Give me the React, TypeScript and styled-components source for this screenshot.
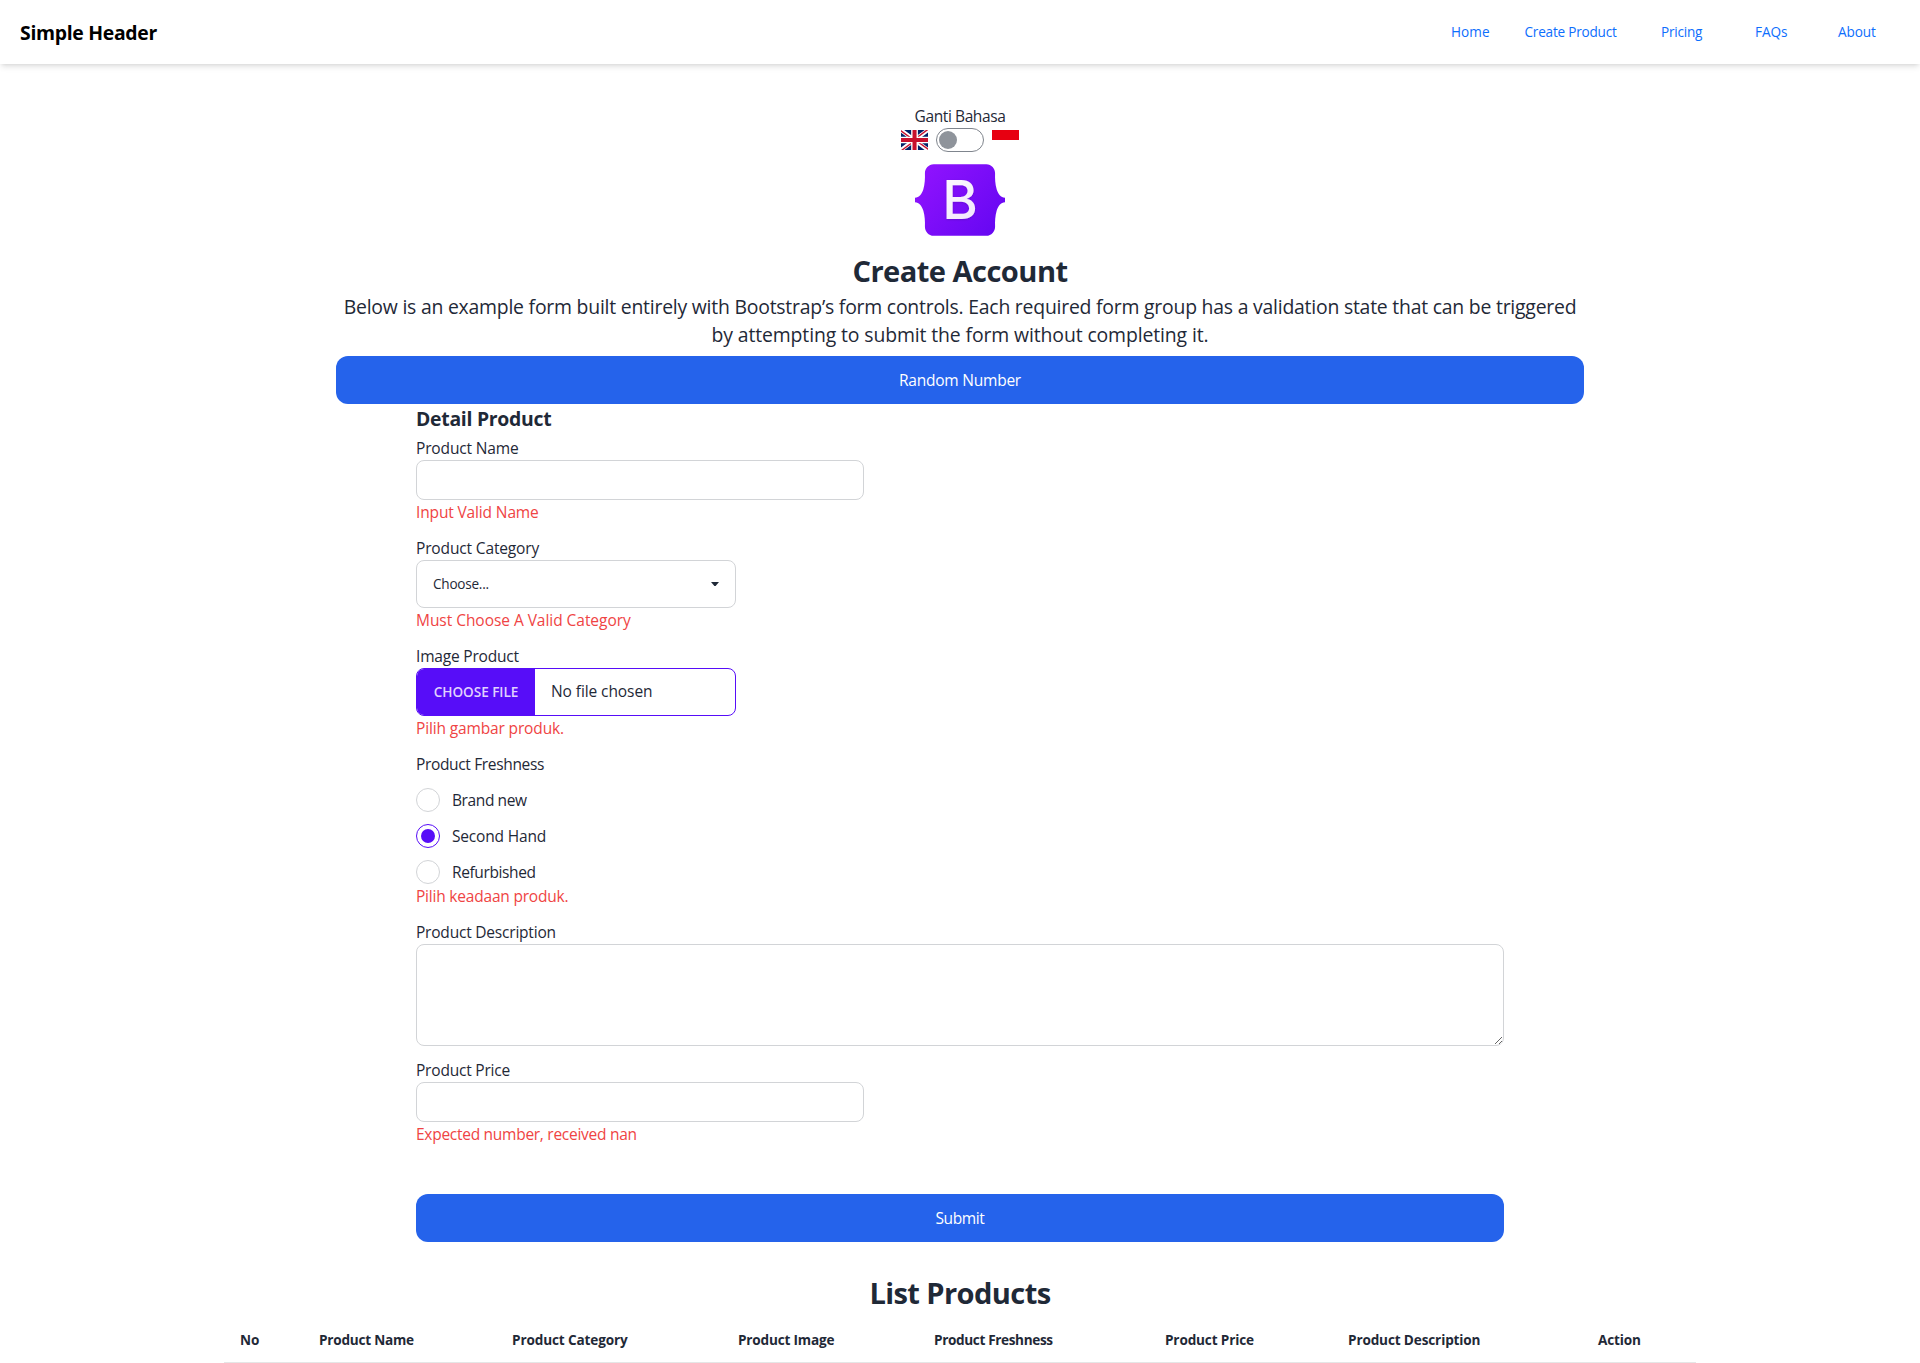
import React, { useState } from 'react';
import styled, { createGlobalStyle, css } from 'styled-components';

const GlobalStyle = createGlobalStyle`
  *, *::before, *::after { box-sizing: border-box; }
  html { background: #fff; }
  body {
    margin: 0;
    color: #1f2937;
    font-family: 'Open Sans', 'Noto Sans', sans-serif;
    font-size: 15.52px;
    line-height: 24px;
    background: #fff;
  }
  h1, h2, h3, p { margin: 0; }
  input, textarea, select, button { font: inherit; color: inherit; }
`;

/* Inline copy with its own tracking */
const T = styled.span<{ $ls?: number }>`
  letter-spacing: ${({ $ls = -0.15 }) => $ls}px;
  white-space: nowrap;
`;

/* ---------- header ---------- */
const Header = styled.header`
  display: flex;
  align-items: center;
  justify-content: space-between;
  height: 64px;
  padding-left: 20px;
  background: #fff;
  box-shadow: 0 4px 6px -1px rgba(0, 0, 0, 0.1), 0 2px 4px -2px rgba(0, 0, 0, 0.1);
`;

const Brand = styled.div`
  padding-top: 2px;
  color: #000;
  font-size: 19.4px;
  font-weight: 700;
  line-height: 28px;
`;

const Nav = styled.nav`
  display: grid;
  grid-template-columns: 73.5px 136.5px 94px 83px 82px;
`;

const NavLink = styled.a`
  color: #0d6efd;
  font-size: 13.58px;
  line-height: 20px;
  text-decoration: none;
`;

/* ---------- intro ---------- */
const Main = styled.main`
  display: flex;
  flex-direction: column;
  width: 1248px;
  margin: 0 auto;
  padding-top: 40px;
`;

const Intro = styled.section`
  display: flex;
  flex-direction: column;
  align-items: center;
  text-align: center;
`;

const LanguageRow = styled.div`
  display: flex;
  align-items: center;
  gap: 8px;
  height: 24px;
  margin-bottom: 12px;
`;

const FlagSvg = styled.svg`
  display: block;
  width: 27px;
  height: 20px;
`;

const Toggle = styled.button<{ $on: boolean }>`
  display: flex;
  align-items: center;
  justify-content: ${({ $on }) => ($on ? 'flex-end' : 'flex-start')};
  width: 48px;
  height: 24px;
  padding: 0 2px;
  border: 1px solid #7f858d;
  border-radius: 24px;
  background: #fff;
  cursor: pointer;

  &::before {
    content: '';
    width: 18px;
    height: 18px;
    border-radius: 50%;
    background: #8f949b;
  }
`;

const LogoSvg = styled.svg`
  display: block;
  width: 90px;
  height: 72px;
  margin-bottom: 16px;
`;

const Title = styled.h1`
  height: 36px;
  font-size: 29.1px;
  font-weight: 700;
  line-height: 38px;
`;

const Lead = styled.p`
  display: flex;
  flex-direction: column;
  align-items: center;
  margin: 5px 0 7px;
  font-size: 19.4px;
  line-height: 28px;
`;

const PrimaryButton = styled.button`
  width: 100%;
  height: 48px;
  padding: 0;
  border: 0;
  border-radius: 12px;
  background: #2563eb;
  color: #fff;
  line-height: 24px;
  cursor: pointer;
`;

/* ---------- form ---------- */
const Form = styled.form`
  display: flex;
  flex-direction: column;
  padding: 0 80px;
`;

const SectionTitle = styled.h3`
  height: 28px;
  margin-bottom: 4px;
  font-size: 19.4px;
  font-weight: 700;
  line-height: 30px;
`;

const Field = styled.div`
  display: flex;
  flex-direction: column;
  align-items: flex-start;
  margin-bottom: 12px;
`;

const Label = styled.label`
  display: block;
  height: 24px;
`;

const ErrorText = styled.div`
  height: 24px;
  color: #ef4444;
`;

const controlBorder = css`
  border: 1px solid #d2d4d7;
  border-radius: 8px;
  background: #fff;
  outline: none;
`;

const TextInput = styled.input`
  ${controlBorder}
  width: 448px;
  height: 40px;
  padding: 0 16px;
`;

const TextArea = styled.textarea`
  ${controlBorder}
  display: block;
  width: 1088px;
  height: 102px;
  padding: 8px 16px;
  resize: vertical;
`;

const SelectBox = styled.div`
  ${controlBorder}
  display: flex;
  align-items: center;
  justify-content: space-between;
  width: 320px;
  height: 48px;
  padding: 0 16px;
  font-size: 13.58px;
  line-height: 20px;
`;

const FileBox = styled.div`
  display: flex;
  width: 320px;
  height: 48px;
  overflow: hidden;
  border: 1px solid #570df8;
  border-radius: 8px;
`;

const FileButton = styled.span`
  display: flex;
  align-items: center;
  justify-content: center;
  width: 118px;
  background: #570df8;
  color: #e0d2fe;
  font-size: 13.58px;
  font-weight: 600;
  line-height: 20px;
`;

const FileName = styled.span`
  display: flex;
  align-items: center;
  padding: 0 0 2px 16px;
`;

const RadioRow = styled.label`
  display: flex;
  align-items: center;
  gap: 12px;
  height: 24px;
  margin-top: 12px;
  cursor: pointer;
`;

const Radio = styled.input`
  appearance: none;
  display: grid;
  place-items: center;
  width: 24px;
  height: 24px;
  margin: 0;
  border: 1px solid #d2d4d7;
  border-radius: 50%;

  &:checked {
    border-color: #570df8;
  }
  &:checked::before {
    content: '';
    width: 14px;
    height: 14px;
    border-radius: 50%;
    background: #570df8;
  }
`;

const SubmitRow = styled.div`
  padding-top: 36px;
`;

/* ---------- table ---------- */
const ListSection = styled.section`
  width: 1472px;
  margin: 32px auto 0;
`;

const ListTitle = styled.h2`
  height: 36px;
  margin-bottom: 8px;
  font-size: 29.1px;
  font-weight: 700;
  line-height: 38px;
  text-align: center;
`;

const Table = styled.table`
  width: 100%;
  table-layout: fixed;
  border-collapse: collapse;
  font-size: 13.58px;
  line-height: 20px;
`;

const Th = styled.th<{ $w: number }>`
  width: ${({ $w }) => $w}px;
  padding: 12px 0 12px 16px;
  border-bottom: 1px solid #e5e6e6;
  font-weight: 700;
  text-align: left;
`;

const UkFlag = () => (
  <FlagSvg viewBox="0 0 640 480" preserveAspectRatio="none">
    <path fill="#012169" d="M0 0h640v480H0z" />
    <path fill="#fff" d="m75 0 244 181L562 0h78v62L400 241l240 178v61h-80L320 301 81 480H0v-60l239-178L0 64V0z" />
    <path fill="#c8102e" d="m424 281 216 159v40L369 281zm-184 20 6 35L54 480H0zM640 0v3L391 191l2-44L590 0zM0 0l239 176h-60L0 42z" />
    <path fill="#fff" d="M241 0v480h160V0zM0 160v160h640V160z" />
    <path fill="#c8102e" d="M0 193v96h640v-96zM273 0v480h96V0z" />
  </FlagSvg>
);

const IdFlag = () => (
  <FlagSvg viewBox="0 0 27 20">
    <path fill="#fff" d="M0 10h27v10H0z" />
    <path fill="#e70011" d="M0 0h27v10H0z" />
  </FlagSvg>
);

const BootstrapLogo = () => (
  <LogoSvg viewBox="0 0 118 94">
    <defs>
      <linearGradient id="badge" x1="10" y1="4" x2="106" y2="90" gradientUnits="userSpaceOnUse">
        <stop stopColor="#9013fe" />
        <stop offset="1" stopColor="#6607f2" />
      </linearGradient>
      <linearGradient id="letter" x1="0" y1="0" x2="0.6" y2="1">
        <stop stopColor="#fff" />
        <stop offset="1" stopColor="#f1e5fc" />
      </linearGradient>
      <filter id="lift" x="-20%" y="-20%" width="140%" height="140%">
        <feDropShadow dx="0" dy="1" stdDeviation="1.4" floodColor="#000" floodOpacity="0.15" />
      </filter>
    </defs>
    <path
      fill="url(#badge)"
      d="M24.509 0c-6.733 0-11.715 5.893-11.492 12.284.214 6.14-.064 14.092-2.066 20.577C8.943 39.365 5.547 43.485 0 44.014v5.972c5.547.529 8.943 4.649 10.951 11.153 2.002 6.485 2.28 14.437 2.066 20.577C12.794 88.106 17.776 94 24.51 94H93.5c6.733 0 11.714-5.893 11.491-12.284-.214-6.14.064-14.092 2.066-20.577 2.009-6.504 5.396-10.624 10.943-11.153v-5.972c-5.547-.529-8.934-4.649-10.943-11.153-2.002-6.484-2.28-14.437-2.066-20.577C105.214 5.894 100.233 0 93.5 0z"
    />
    <text
      x="59"
      y="72.5"
      textAnchor="middle"
      fontFamily="Inter, sans-serif"
      fontWeight="500"
      fontSize="71"
      fill="url(#letter)"
      filter="url(#lift)"
    >
      B
    </text>
  </LogoSvg>
);

const Caret = () => (
  <svg width="8" height="4" viewBox="0 0 8 4">
    <path fill="#1f2937" d="M0 0h8L4.6 4H3.4z" />
  </svg>
);

const navLinks = [
  { text: 'Home', ls: 0.08 },
  { text: 'Create Product', ls: -0.22 },
  { text: 'Pricing', ls: -0.23 },
  { text: 'FAQs', ls: -0.05 },
  { text: 'About', ls: -0.1 },
];

const conditions = [
  { text: 'Brand new', ls: -0.4 },
  { text: 'Second Hand', ls: -0.18 },
  { text: 'Refurbished', ls: -0.39 },
];

const columns = [
  { text: 'No', w: 79, ls: 0 },
  { text: 'Product Name', w: 193, ls: -0.235 },
  { text: 'Product Category', w: 226, ls: -0.135 },
  { text: 'Product Image', w: 196, ls: -0.185 },
  { text: 'Product Freshness', w: 231, ls: -0.358 },
  { text: 'Product Price', w: 183, ls: -0.153 },
  { text: 'Product Description', w: 250, ls: -0.143 },
  { text: 'Action', w: 114, ls: -0.159 },
];

export default function App() {
  const [indonesian, setIndonesian] = useState(false);
  const [condition, setCondition] = useState('Second Hand');

  return (
    <>
      <GlobalStyle />
      <Header>
        <Brand>
          <T $ls={-0.3}>Simple Header</T>
        </Brand>
        <Nav>
          {navLinks.map(({ text, ls }) => (
            <NavLink key={text} href="#">
              <T $ls={ls}>{text}</T>
            </NavLink>
          ))}
        </Nav>
      </Header>

      <Main>
        <Intro>
          <T $ls={-0.41}>Ganti Bahasa</T>
          <LanguageRow>
            <UkFlag />
            <Toggle type="button" aria-label="Ganti Bahasa" $on={indonesian} onClick={() => setIndonesian(!indonesian)} />
            <IdFlag />
          </LanguageRow>
          <BootstrapLogo />
          <Title>
            <T $ls={-0.549}>Create Account</T>
          </Title>
          <Lead>
            <T $ls={-0.222}>
              Below is an example form built entirely with Bootstrap’s form controls. Each required form group has a
              validation state that can be triggered
            </T>
            <T $ls={-0.116}>by attempting to submit the form without completing it.</T>
          </Lead>
        </Intro>
        <PrimaryButton type="button">
          <T $ls={-0.24}>Random Number</T>
        </PrimaryButton>

        <Form onSubmit={(e) => e.preventDefault()}>
          <SectionTitle>
            <T $ls={-0.27}>Detail Product</T>
          </SectionTitle>

          <Field>
            <Label htmlFor="name">
              <T>Product Name</T>
            </Label>
            <TextInput id="name" />
            <ErrorText>
              <T $ls={-0.15}>Input Valid Name</T>
            </ErrorText>
          </Field>

          <Field>
            <Label>
              <T>Product Category</T>
            </Label>
            <SelectBox>
              <T $ls={-0.243}>Choose...</T>
              <Caret />
            </SelectBox>
            <ErrorText>
              <T $ls={-0.05}>Must Choose A Valid Category</T>
            </ErrorText>
          </Field>

          <Field>
            <Label>
              <T $ls={-0.203}>Image Product</T>
            </Label>
            <FileBox>
              <FileButton>
                <T $ls={-0.051}>CHOOSE FILE</T>
              </FileButton>
              <FileName>
                <T $ls={-0.095}>No file chosen</T>
              </FileName>
            </FileBox>
            <ErrorText>
              <T>Pilih gambar produk.</T>
            </ErrorText>
          </Field>

          <Field>
            <Label as="div">
              <T $ls={-0.35}>Product Freshness</T>
            </Label>
            {conditions.map(({ text, ls }) => (
              <RadioRow key={text}>
                <Radio
                  type="radio"
                  name="condition"
                  checked={condition === text}
                  onChange={() => setCondition(text)}
                />
                <T $ls={ls}>{text}</T>
              </RadioRow>
            ))}
            <ErrorText>
              <T $ls={-0.211}>Pilih keadaan produk.</T>
            </ErrorText>
          </Field>

          <Field>
            <Label htmlFor="description">
              <T $ls={-0.213}>Product Description</T>
            </Label>
            <TextArea id="description" />
          </Field>

          <Field>
            <Label htmlFor="price">
              <T $ls={-0.211}>Product Price</T>
            </Label>
            <TextInput id="price" />
            <ErrorText>
              <T $ls={-0.281}>Expected number, received nan</T>
            </ErrorText>
          </Field>

          <SubmitRow>
            <PrimaryButton type="submit">
              <T $ls={-0.38}>Submit</T>
            </PrimaryButton>
          </SubmitRow>
        </Form>
      </Main>

      <ListSection>
        <ListTitle>
          <T $ls={-0.6}>List Products</T>
        </ListTitle>
        <Table>
          <thead>
            <tr>
              {columns.map(({ text, w, ls }) => (
                <Th key={text} $w={w}>
                  <T $ls={ls}>{text}</T>
                </Th>
              ))}
            </tr>
          </thead>
        </Table>
      </ListSection>
    </>
  );
}
